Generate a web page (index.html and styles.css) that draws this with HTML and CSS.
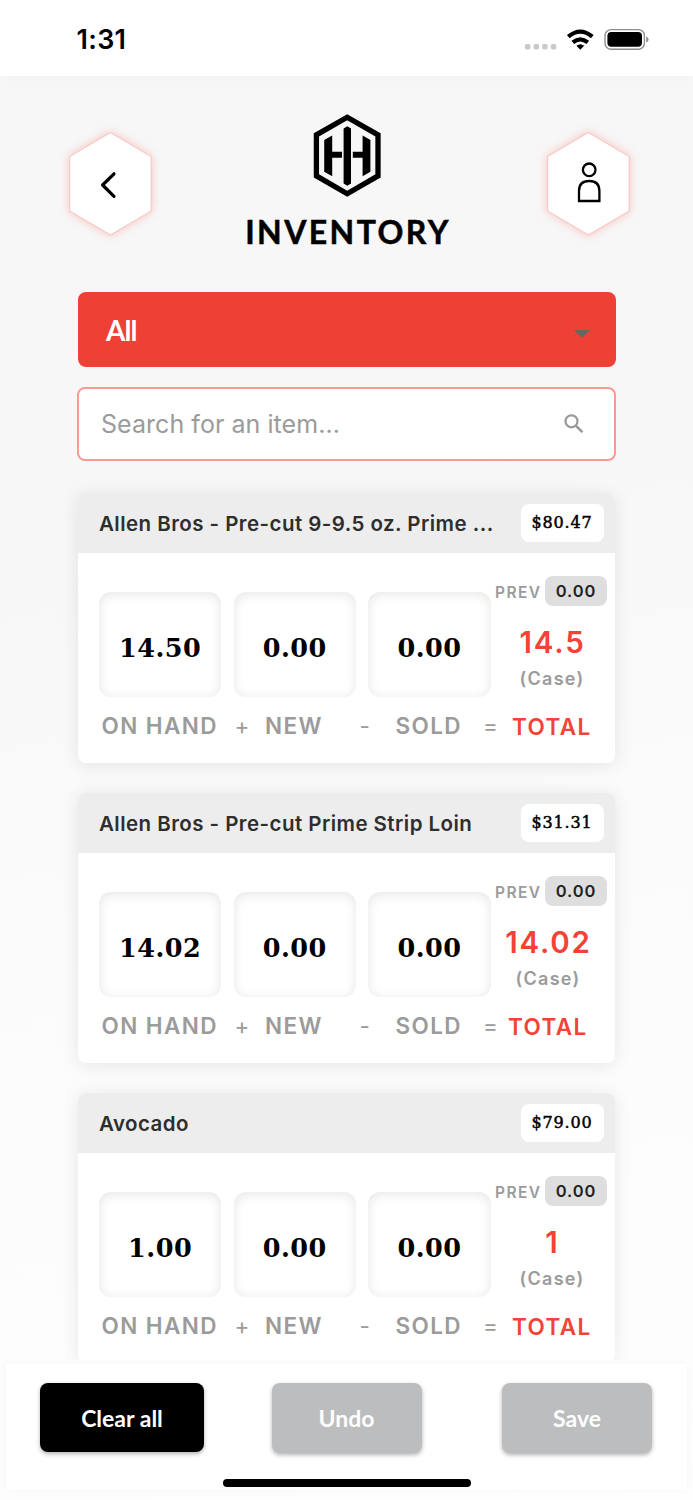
FILE: index.html
```html
<!DOCTYPE html>
<html lang="en">
<head>
<meta charset="utf-8">
<title>Inventory</title>
<link rel="stylesheet" href="styles.css">
</head>
<body>
<div class="app">
  <div class="statusbar">
    <span class="clock">1:31</span>
    <svg class="status-icons" width="126" height="24" viewBox="524 28 126 24">
      <g fill="#c9c9c9"><rect x="525" y="44" width="5.4" height="5.4" rx="1.6"/><rect x="533.6" y="44" width="5.4" height="5.4" rx="1.6"/><rect x="542.2" y="44" width="5.4" height="5.4" rx="1.6"/><rect x="550.8" y="44" width="5.4" height="5.4" rx="1.6"/></g>
      <g fill="none" stroke="#000" stroke-width="4.2"><path d="M568.3 36.6Q580.3 26.6 592.3 36.6"/><path d="M572.8 42.4Q580.3 36.2 587.8 42.4"/></g>
      <path d="M576.4 45.8Q580.3 42.6 584.2 45.8L580.3 49.8Z"/>
      <rect x="605" y="29.6" width="39.4" height="19.6" rx="6" fill="none" stroke="#8e8e8e" stroke-width="1.4"/>
      <rect x="607.4" y="32" width="34.6" height="14.8" rx="4"/>
      <path d="M646.2 36.2Q648.6 37.4 648.6 39.4T646.2 42.6Z" fill="#8e8e8e"/>
    </svg>
  </div>
  <main class="content">
    <header class="top">
      <button class="hex" aria-label="Back">
        <svg width="122" height="142" viewBox="49 112 122 142"><path class="hex-shape" d="M110.4 132.4L151.2 156.6V211L110.4 235L69.6 211V156.6Z"/><path d="M114 173.8L102.6 185L114 196.4" fill="none" stroke="#000" stroke-width="3.2" stroke-linecap="round" stroke-linejoin="round"/></svg>
      </button>
      <div class="brand">
        <svg width="68" height="84" viewBox="312 113.5 68 84"><path d="M346.2 116.8L377 134.4V175.4L346.2 193.2L315.4 175.4V134.4Z" fill="none" stroke="#000" stroke-width="5.3"/><path d="M323.2 139.6L331.2 135V151.2H341V157.2H331.2V175.8L323.2 171.3ZM369.4 139.6L361.6 135V151.2H351.8V157.2H361.6V175.8L369.4 171.3ZM342.6 128L346.3 125.8L350 128V183L346.3 185.2L342.6 183Z"/></svg>
        <h1 class="brand-name">INVENTORY</h1>
      </div>
      <button class="hex" aria-label="Profile">
        <svg width="122" height="142" viewBox="527 112 122 142"><path class="hex-shape" d="M588.4 132.4L629.2 156.6V211L588.4 235L547.6 211V156.6Z"/><g fill="none" stroke="#000" stroke-width="2.3"><circle cx="589.2" cy="169.8" r="6.3"/><path d="M579 201V191Q579 181 589.2 181T599.4 191V201Z"/></g></svg>
      </button>
    </header>
    <div class="select"><span>All</span><svg width="16" height="8" viewBox="0 0 16 8"><path d="M0 0H16L8 8Z" fill="#666"/></svg></div>
    <div class="search"><span>Search for an item…</span><svg width="20" height="20" viewBox="0 0 20 20" fill="none" stroke="#999"><circle cx="7.5" cy="7.3" r="6" stroke-width="2.2"/><path d="M12 11.8L18.4 18.2" stroke-width="2.6"/></svg></div>

    <section class="card">
      <div class="card-head"><h2 class="name">Allen Bros - Pre-cut 9-9.5 oz. Prime ...</h2><span class="price">$80.47</span></div>
      <div class="card-body">
        <div class="counts"><span class="count">14.50</span><span class="count">0.00</span><span class="count">0.00</span></div>
        <div class="summary"><div class="prev">PREV<span class="prev-value">0.00</span></div><div class="total-value">14.5</div><div class="unit">(Case)</div></div>
        <div class="labels"><span class="onhand">ON HAND</span><span class="op plus">+</span><span class="new">NEW</span><span class="op minus">-</span><span class="sold">SOLD</span><span class="op equals">=</span><span class="total">TOTAL</span></div>
      </div>
    </section>

    <section class="card wide-total">
      <div class="card-head"><h2 class="name">Allen Bros - Pre-cut Prime Strip Loin</h2><span class="price">$31.31</span></div>
      <div class="card-body">
        <div class="counts"><span class="count">14.02</span><span class="count">0.00</span><span class="count">0.00</span></div>
        <div class="summary"><div class="prev">PREV<span class="prev-value">0.00</span></div><div class="total-value">14.02</div><div class="unit">(Case)</div></div>
        <div class="labels"><span class="onhand">ON HAND</span><span class="op plus">+</span><span class="new">NEW</span><span class="op minus">-</span><span class="sold">SOLD</span><span class="op equals">=</span><span class="total">TOTAL</span></div>
      </div>
    </section>

    <section class="card">
      <div class="card-head"><h2 class="name">Avocado</h2><span class="price">$79.00</span></div>
      <div class="card-body">
        <div class="counts"><span class="count">1.00</span><span class="count">0.00</span><span class="count">0.00</span></div>
        <div class="summary"><div class="prev">PREV<span class="prev-value">0.00</span></div><div class="total-value">1</div><div class="unit">(Case)</div></div>
        <div class="labels"><span class="onhand">ON HAND</span><span class="op plus">+</span><span class="new">NEW</span><span class="op minus">-</span><span class="sold">SOLD</span><span class="op equals">=</span><span class="total">TOTAL</span></div>
      </div>
    </section>
  </main>
  <footer class="footer">
    <div class="actions">
      <button class="action primary">Clear all</button>
      <button class="action undo">Undo</button>
      <button class="action">Save</button>
    </div>
    <div class="home-bar"></div>
  </footer>
</div>
</body>
</html>
```
FILE: styles.css
```css
* { box-sizing: border-box; }
body { margin: 0; background: #fff; font-family: Inter, "Liberation Sans", sans-serif; }
button { border: 0; padding: 0; background: none; font: inherit; }
h1, h2 { margin: 0; }
svg { display: block; flex: none; }

.app { width: 693px; height: 1500px; display: flex; flex-direction: column; overflow: hidden; background: linear-gradient(168deg, #f7f7f7 32%, #fbfbfb 60%, #fefefe); }

.statusbar { height: 76px; flex: none; background: #fff; display: flex; justify-content: space-between; align-items: flex-start; padding: 28px 43px 0 76.5px; box-shadow: 0 2px 10px rgba(0, 0, 0, .025); position: relative; }
.clock { font-size: 27px; font-weight: 600; line-height: 24px; letter-spacing: .3px; }

.content { height: 1284px; flex: none; overflow: hidden; padding: 0 77px; }
.top { height: 216px; margin: 0 -33px 0 -28px; display: flex; justify-content: space-between; }
.hex { width: 122px; height: 142px; margin-top: 36px; }
.hex-shape { fill: #fff; stroke: #f9c9c6; stroke-width: 1.2; filter: drop-shadow(0 0 5px rgba(244, 67, 54, .28)); }
.brand { display: flex; flex-direction: column; align-items: center; padding-top: 37.5px; margin-right: 5px; }
.brand-name { font-family: Lato, sans-serif; font-weight: 700; font-size: 32px; line-height: 36px; letter-spacing: 2.4px; margin: 16px -3px 0 0; -webkit-text-stroke: .5px #000; }

.select { height: 75px; margin: 0 0 0 .5px; width: 538px; border-radius: 8px; background: #ef4036; color: #fff; display: flex; align-items: center; justify-content: space-between; padding: 0 25.5px 0 28.5px; font: 700 28px/36px Lato, sans-serif; letter-spacing: -1px; }
.select svg { margin-top: 8px; }
.search { height: 74px; margin-top: 20px; border: 2px solid #f59b96; border-radius: 8px; background: #fff; display: flex; align-items: center; justify-content: space-between; padding: 0 30px 0 22px; color: #9b9b9b; font-size: 25px; letter-spacing: .05px; }

.card { width: 537px; height: 270px; margin: 32px 0 0 1px; border-radius: 8px; background: #fff; box-shadow: 0 2px 18px rgba(0, 0, 0, .09); }
.card + .card { margin-top: 30px; }
.card-head { height: 60px; display: flex; align-items: center; justify-content: space-between; padding: 0 11.5px 0 21px; background: #ededed; border-radius: 8px 8px 0 0; }
.name { font-size: 20.5px; font-weight: 630; letter-spacing: .45px; color: #2e2e2e; white-space: nowrap; }
.price { width: 83px; height: 38px; border-radius: 8px; background: #fff; text-align: center; font: 16px/37px "DejaVu Serif", serif; letter-spacing: .8px; -webkit-text-stroke: .5px #000; }

.card-body { display: grid; grid-template-columns: 392px 118px; grid-template-rows: 151px 44px; padding-left: 21px; }
.counts { display: flex; gap: 12.5px; padding-top: 39px; }
.count { width: 122.2px; height: 105px; border-radius: 12px; box-shadow: inset 0 2px 12px rgba(0, 0, 0, .1); text-align: center; font: bold 25.5px/113px "DejaVu Serif", serif; letter-spacing: .5px; }
.summary { padding-top: 23px; color: #9b9b9b; font-weight: 630; }
.prev { display: flex; align-items: flex-start; justify-content: space-between; width: 112px; height: 30px; margin-left: 4px; font-size: 15.5px; line-height: 34px; letter-spacing: 1.4px; }
.prev-value { width: 62px; height: 30px; border-radius: 8px; background: #dedede; color: #222; font-size: 16.5px; line-height: 31px; text-align: center; letter-spacing: .9px; }
.total-value { width: 123px; margin-top: 18px; color: #f44336; text-align: center; font-size: 29.5px; line-height: 36px; letter-spacing: 1.8px; }
.unit { width: 122px; margin-top: 8px; text-align: center; font-size: 18px; line-height: 22px; letter-spacing: 1.3px; }
.labels { grid-column: 1 / 3; display: flex; align-items: center; padding: 0 0 0 2.5px; color: #9b9b9b; font-size: 22.5px; font-weight: 630; letter-spacing: 1.4px; line-height: 42px; white-space: nowrap; }
.op { font-weight: 400; letter-spacing: 0; }
.onhand { width: 133px; }
.plus { width: 30.5px; }
.new { width: 94.5px; }
.minus { width: 36px; }
.sold { width: 87.5px; }
.equals { width: 29px; }
.total { color: #f44336; padding-top: 2px; }
.wide-total .total-value, .wide-total .unit { margin-left: -4px; }
.wide-total .equals { width: 25px; }

.footer { position: relative; flex: none; height: 126px; margin: 4px 6px 0; background: #fff; box-shadow: 0 0 10px rgba(0, 0, 0, .035); padding: 19px 35px 0 34px; }
.actions { display: flex; justify-content: space-between; }
.action { width: 150px; height: 70px; border-radius: 8px; background: #bcbdbf; color: #fff; font: 700 23px/70px Lato, sans-serif; box-shadow: 0 2px 4px rgba(0, 0, 0, .3); }
.undo { margin-right: 13px; }
.primary { width: 164px; height: 69px; background: #000; }
.home-bar { width: 248px; height: 8px; margin: 25.5px 0 0 183px; border-radius: 4px; background: #000; }
```
